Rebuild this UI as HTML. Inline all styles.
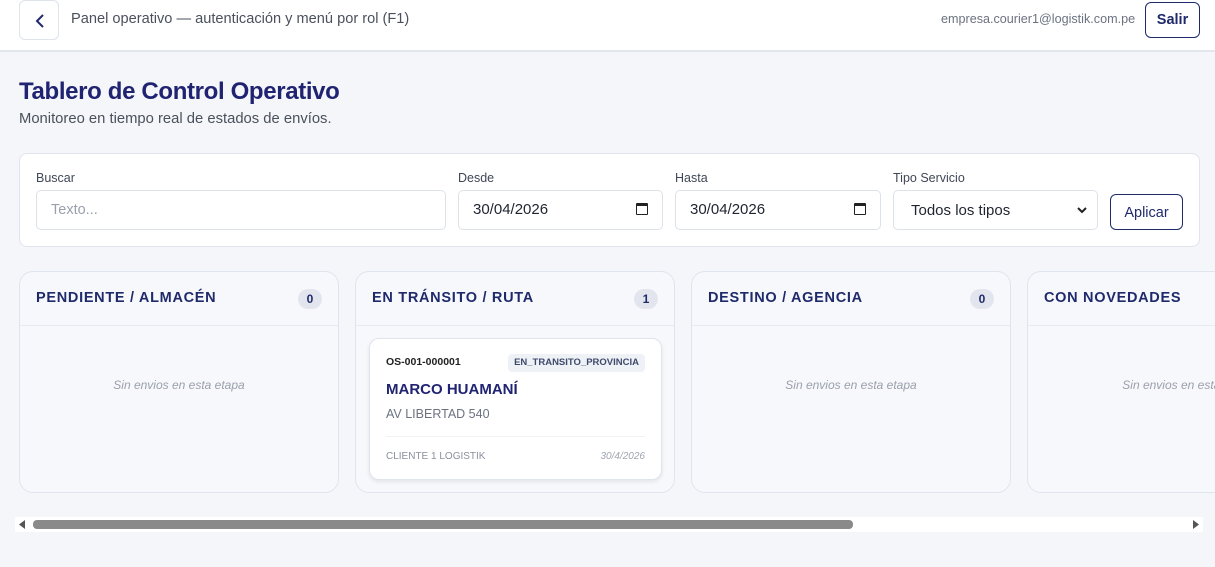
<!DOCTYPE html>
<html><head><meta charset="utf-8"><style>
*{box-sizing:border-box;margin:0;padding:0}
body{width:1215px;height:567px;overflow:hidden;background:#f5f6fa;font-family:"Liberation Sans",sans-serif;position:relative}
.a{position:absolute}
.hdr{left:0;top:0;width:1215px;height:52px;background:#fff;border-bottom:2px solid #e3e6ec}
.back{left:19px;top:0;width:40px;height:40px;border:1px solid #dfe3ea;border-radius:6px;background:#fff}
.lbl{font-size:12.5px;color:#3f4756}
.inp{background:#fff;border:1px solid #dde1e8;border-radius:5px;height:40px;font-size:15px;color:#1f2430;padding:0 14px;line-height:38px}
.col{top:271px;width:320px;height:222px;border:1px solid #e0e4ec;border-radius:14px;background:#f7f8fb;overflow:hidden}
.ch{height:54px;border-bottom:1px solid #e7eaf0;font-weight:bold;font-size:14.5px;color:#1f2a6b;letter-spacing:.7px;padding:18px 16px}
.cnt{position:absolute;right:16px;top:17px;width:24px;height:20px;border-radius:10px;background:#e2e5ee;font-size:12px;font-weight:bold;text-align:center;line-height:20px;color:#1f2a6b}
.empty{position:absolute;top:106px;width:100%;text-align:center;font-style:italic;font-size:12px;color:#9aa0ac}
</style></head><body>
<div class="a hdr"></div>
<div class="a back"><svg width="40" height="40" viewBox="0 0 40 40"><path d="M23 14l-6 6 6 6" fill="none" stroke="#1f2a6b" stroke-width="2"/></svg></div>
<div class="a" style="left:71px;top:11px;font-size:14.6px;color:#4a505c">Panel operativo — autenticación y menú por rol (F1)</div>
<div class="a" style="left:941px;top:12px;font-size:12.6px;color:#6b7280">empresa.courier1@logistik.com.pe</div>
<div class="a" style="left:1145px;top:2px;width:55px;height:36px;border:1px solid #1f2a6b;border-radius:6px;font-size:14.5px;font-weight:bold;color:#1f2a6b;text-align:center;line-height:34px;background:#fff">Salir</div>
<div class="a" style="left:19px;top:78px;font-size:24px;font-weight:bold;color:#1f2371;letter-spacing:-.35px">Tablero de Control Operativo</div>
<div class="a" style="left:19px;top:111px;font-size:14.8px;color:#4a505c">Monitoreo en tiempo real de estados de envíos.</div>
<div class="a" style="left:19px;top:153px;width:1181px;height:94px;background:#fff;border:1px solid #e0e4ec;border-radius:8px"></div>
<div class="a lbl" style="left:36px;top:171px">Buscar</div>
<div class="a inp" style="left:36px;top:190px;width:410px;color:#9aa0ac;font-size:14.5px">Texto...</div>
<div class="a lbl" style="left:458px;top:171px">Desde</div>
<div class="a inp" style="left:458px;top:190px;width:205px">30/04/2026<span style="position:absolute;right:14px;top:12px;width:12px;height:12px;border:1.5px solid #222;border-top-width:3px;border-radius:1px"></span></div>
<div class="a lbl" style="left:675px;top:171px">Hasta</div>
<div class="a inp" style="left:675px;top:190px;width:206px">30/04/2026<span style="position:absolute;right:14px;top:12px;width:12px;height:12px;border:1.5px solid #222;border-top-width:3px;border-radius:1px"></span></div>
<div class="a lbl" style="left:893px;top:171px">Tipo Servicio</div>
<div class="a inp" style="left:893px;top:190px;width:205px;padding-left:17px;line-height:40px">Todos los tipos<svg class="a" style="right:10px;top:15px" width="10" height="8"><path d="M1 2l4 4 4-4" fill="none" stroke="#222" stroke-width="2"/></svg></div>
<div class="a" style="left:1110px;top:194px;width:73px;height:36px;border:1px solid #1f2a6b;border-radius:6px;font-size:14.5px;color:#1f2a6b;text-align:center;line-height:36px">Aplicar</div>

<div class="a col" style="left:19px"><div class="ch">PENDIENTE / ALMACÉN</div><div class="cnt">0</div><div class="empty">Sin envios en esta etapa</div></div>
<div class="a col" style="left:355px"><div class="ch">EN TRÁNSITO / RUTA</div><div class="cnt">1</div>
<div class="a" style="left:13px;top:66px;width:293px;height:142px;background:#fff;border:1px solid #e0e4ec;border-radius:10px;box-shadow:0 2px 4px rgba(0,0,0,.08)">
<div class="a" style="left:16px;top:17px;font-size:10.5px;font-weight:bold;color:#222">OS-001-000001</div>
<div class="a" style="right:16px;top:15px;padding:0 6px;height:18px;line-height:18px;background:#eef1f6;border-radius:4px;font-size:9.5px;font-weight:bold;color:#3f4a6b">EN_TRANSITO_PROVINCIA</div>
<div class="a" style="left:16px;top:42px;font-size:15px;font-weight:bold;color:#1f2371">MARCO HUAMANÍ</div>
<div class="a" style="left:16px;top:68px;font-size:12.5px;color:#6b7280">AV LIBERTAD 540</div>
<div class="a" style="left:16px;right:16px;top:97px;border-top:1px solid #f0f2f5"></div>
<div class="a" style="left:16px;top:112px;font-size:10px;color:#8a909c">CLIENTE 1 LOGISTIK</div>
<div class="a" style="right:16px;top:112px;font-size:10px;font-style:italic;color:#a0a6b0">30/4/2026</div>
</div></div>
<div class="a col" style="left:691px"><div class="ch">DESTINO / AGENCIA</div><div class="cnt">0</div><div class="empty">Sin envios en esta etapa</div></div>
<div class="a col" style="left:1027px;width:200px"><div class="ch">CON NOVEDADES</div><div class="empty" style="width:320px">Sin envios en esta etapa</div></div>

<div class="a" style="left:15px;top:517px;width:1188px;height:15px;background:#fff"></div>
<svg class="a" style="left:18px;top:520px" width="8" height="9"><path d="M7 0v9L1 4.5z" fill="#555"/></svg>
<svg class="a" style="left:1192px;top:520px" width="8" height="9"><path d="M1 0v9l6-4.5z" fill="#555"/></svg>
<div class="a" style="left:33px;top:520px;width:820px;height:9px;border-radius:4px;background:#8a8a8a"></div>
</body></html>
